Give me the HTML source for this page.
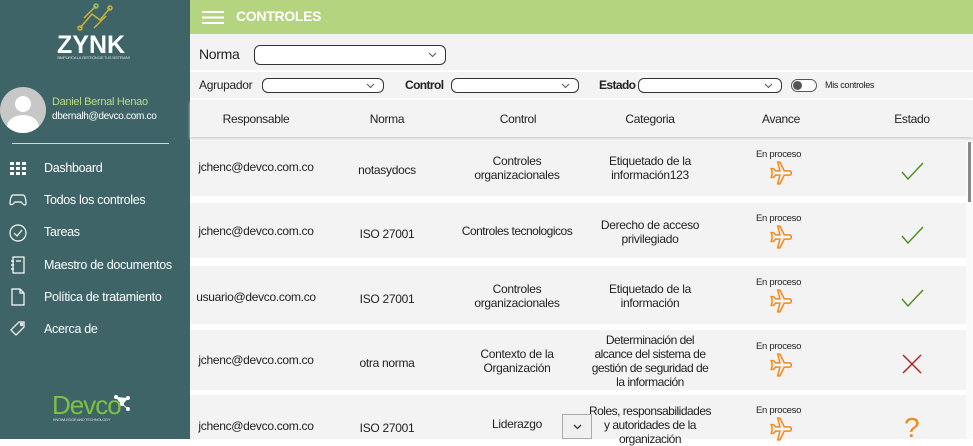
<!DOCTYPE html>
<html><head><meta charset="utf-8"><style>
*{margin:0;padding:0;box-sizing:border-box}
body{width:973px;height:439px;overflow:hidden;font-family:"Liberation Sans",sans-serif;background:#fff;position:relative;color:#222;letter-spacing:-0.3px}
.sb{position:absolute;left:0;top:0;width:190px;height:439px;background:#3e6468;color:#fff}
.abs{position:absolute}
.top{position:absolute;left:190px;top:0;width:783px;height:34px;background:#b4d47f}
.f{position:absolute;left:190px;width:783px;background:#f3f3f3}
.sel{position:absolute;border:1px solid #333;border-radius:6px;height:15px;background:#fff}
.sel svg{position:absolute;right:8px;top:4px}
.row{position:absolute;left:190px;width:776px;background:#f3f3f3}
.c{position:absolute;text-align:center;font-size:12px;line-height:14px;transform:translateX(-50%);white-space:nowrap}
.nav{position:absolute;left:44px;font-size:12.5px}
</style></head><body>
<div class="sb">
  <svg class="abs" style="left:70px;top:0" width="50" height="32" viewBox="0 0 50 32" fill="none" stroke="#c9b13a" stroke-width="1.5"><path d="M10 28 L22 14 L30 20 L40 8 M14 18 L26 6 M24 28 L36 16"/><circle cx="10" cy="28" r="2"/><circle cx="40" cy="8" r="2"/><circle cx="26" cy="6" r="2" stroke="#9bc25a"/></svg>
  <div class="abs" style="left:57px;top:31px;font:bold 25px 'Liberation Sans',sans-serif;letter-spacing:0">ZYNK</div>
  <div class="abs" style="left:57px;top:55px;font-size:4px;color:#ddd">SIMPLIFICA LA GESTIÓN DE TUS SISTEMAS</div>
  <div class="abs" style="left:0;top:87px;width:46px;height:46px;border-radius:50%;background:#c7c7c7;overflow:hidden">
    <div class="abs" style="left:15px;top:9px;width:16px;height:16px;border-radius:50%;background:#fff"></div>
    <div class="abs" style="left:7px;top:28px;width:32px;height:24px;border-radius:50%;background:#fff"></div>
  </div>
  <div class="abs" style="left:52px;top:96px;font-size:11px;color:#b9dc7e">Daniel Bernal Henao</div>
  <div class="abs" style="left:52px;top:111px;font-size:10px">dbernalh@devco.com.co</div>
  <div class="abs" style="left:12px;top:143px;width:157px;height:1px;background:#cfd9da"></div>
  <svg class="abs" style="left:10px;top:162px" width="16" height="14"><g fill="#fff"><rect x="0" y="0" width="4" height="3"/><rect x="6" y="0" width="4" height="3"/><rect x="12" y="0" width="4" height="3"/><rect x="0" y="5" width="4" height="3"/><rect x="6" y="5" width="4" height="3"/><rect x="12" y="5" width="4" height="3"/><rect x="0" y="10" width="4" height="3"/><rect x="6" y="10" width="4" height="3"/><rect x="12" y="10" width="4" height="3"/></g></svg>
  <div class="nav" style="top:161px">Dashboard</div>
  <svg class="abs" style="left:9px;top:194px" width="18" height="12" fill="none" stroke="#fff" stroke-width="1.2"><path d="M4 1h10c2 0 3 5 3 8s-2 2-3 1l-2-2H6l-2 2c-1 1-3 1-3-1s1-8 3-8z"/></svg>
  <div class="nav" style="top:193px">Todos los controles</div>
  <svg class="abs" style="left:9px;top:224px" width="18" height="18" fill="none" stroke="#fff" stroke-width="1.2"><circle cx="9" cy="9" r="8"/><path d="M5 9l3 3 5-6"/></svg>
  <div class="nav" style="top:225px">Tareas</div>
  <svg class="abs" style="left:11px;top:256px" width="14" height="18" fill="none" stroke="#fff" stroke-width="1.2"><rect x="2" y="1" width="11" height="16"/><path d="M5 5h5M0 5h3M0 9h3M0 13h3"/></svg>
  <div class="nav" style="top:258px">Maestro de documentos</div>
  <svg class="abs" style="left:11px;top:288px" width="14" height="18" fill="none" stroke="#fff" stroke-width="1.2"><path d="M1 1h8l4 4v12H1z M9 1v4h4"/></svg>
  <div class="nav" style="top:290px">Política de tratamiento</div>
  <svg class="abs" style="left:9px;top:320px" width="18" height="18" fill="none" stroke="#fff" stroke-width="1.2"><path d="M10 2h5v5l-8 8-5-5z"/><circle cx="12.5" cy="4.5" r="1"/></svg>
  <div class="nav" style="top:322px">Acerca de</div>
  <div class="abs" style="left:52px;top:390px;font:26px 'Liberation Sans',sans-serif;color:#7cc242;letter-spacing:-1px">Devco</div>
  <svg class="abs" style="left:112px;top:394px" width="20" height="20" fill="#fff" stroke="#fff" stroke-width="1"><circle cx="4" cy="3" r="1.5"/><circle cx="16" cy="4" r="1.5"/><circle cx="10" cy="10" r="1.5"/><circle cx="16" cy="15" r="1.5"/><path d="M4 3L10 10L16 4M10 10L16 15"/></svg>
  <div class="abs" style="left:53px;top:417px;font-size:4px;color:#ddd">KNOWLEDGE AND TECHNOLOGY</div>
</div>
<div class="top">
  <svg class="abs" style="left:12px;top:10px" width="22" height="15" stroke="#fff" stroke-width="2"><path d="M0 2h22M0 7.5h22M0 13h22"/></svg>
  <div class="abs" style="left:46px;top:8px;font:bold 14px 'Liberation Sans',sans-serif;color:#fff">CONTROLES</div>
</div>
<div class="f" style="top:34px;height:36px">
  <div class="abs" style="left:9px;top:12px;font-size:14px">Norma</div>
  <div class="sel" style="left:64px;top:11px;width:192px;height:20px"><svg width="9" height="6" style="top:6px"><path d="M1 1l3.5 3.5L8 1" fill="none" stroke="#555"/></svg></div>
</div>
<div class="f" style="top:72px;height:26px">
  <div class="abs" style="left:9px;top:6px;font-size:12px">Agrupador</div>
  <div class="sel" style="left:72px;top:6px;width:122px"><svg width="9" height="6"><path d="M1 1l3.5 3.5L8 1" fill="none" stroke="#555"/></svg></div>
  <div class="abs" style="left:215px;top:6px;font-size:12px;font-weight:bold;letter-spacing:-0.6px">Control</div>
  <div class="sel" style="left:261px;top:6px;width:128px"><svg width="9" height="6"><path d="M1 1l3.5 3.5L8 1" fill="none" stroke="#555"/></svg></div>
  <div class="abs" style="left:409px;top:6px;font-size:12px;font-weight:bold;letter-spacing:-0.6px">Estado</div>
  <div class="sel" style="left:448px;top:6px;width:144px"><svg width="9" height="6"><path d="M1 1l3.5 3.5L8 1" fill="none" stroke="#555"/></svg></div>
  <div class="abs" style="left:601px;top:7px;width:26px;height:13px;border:1px solid #555;border-radius:7px;background:#fff"><div class="abs" style="left:1px;top:1px;width:9px;height:9px;border-radius:50%;background:#555"></div></div>
  <div class="abs" style="left:635px;top:8px;font-size:9px">Mis controles</div>
</div>
<div class="f" style="top:100px;height:37px;box-shadow:0 2px 3px #ccc;z-index:2">
  <div class="c" style="left:66px;top:12px">Responsable</div>
  <div class="c" style="left:197px;top:12px">Norma</div>
  <div class="c" style="left:328px;top:12px">Control</div>
  <div class="c" style="left:460px;top:12px">Categoria</div>
  <div class="c" style="left:591px;top:12px">Avance</div>
  <div class="c" style="left:722px;top:12px">Estado</div>
</div>
<div class="abs" style="left:966px;top:137px;width:7px;height:302px;background:#fafafa"><div class="abs" style="left:2px;top:5px;width:3px;height:60px;background:#888"></div></div>

<div class="row" style="top:141px;height:55px">
 <div class="c" style="left:66px;top:19px">jchenc@devco.com.co</div>
 <div class="c" style="left:197px;top:22px">notasydocs</div>
 <div class="c" style="left:327px;top:13px">Controles<br>organizacionales</div>
 <div class="c" style="left:460px;top:13px">Etiquetado de la<br>información123</div>
</div>
<div class="row" style="top:203px;height:55px">
 <div class="c" style="left:66px;top:21px">jchenc@devco.com.co</div>
 <div class="c" style="left:197px;top:24px">ISO 27001</div>
 <div class="c" style="left:327px;top:21px;letter-spacing:-0.5px">Controles tecnologicos</div>
 <div class="c" style="left:460px;top:15px">Derecho de acceso<br>privilegiado</div>
</div>
<div class="row" style="top:266px;height:58px">
 <div class="c" style="left:66px;top:24px">usuario@devco.com.co</div>
 <div class="c" style="left:197px;top:26px">ISO 27001</div>
 <div class="c" style="left:327px;top:16px">Controles<br>organizacionales</div>
 <div class="c" style="left:460px;top:16px">Etiquetado de la<br>información</div>
</div>
<div class="row" style="top:330px;height:60px">
 <div class="c" style="left:66px;top:23px">jchenc@devco.com.co</div>
 <div class="c" style="left:197px;top:26px">otra norma</div>
 <div class="c" style="left:327px;top:17px">Contexto de la<br>Organización</div>
 <div class="c" style="left:460px;top:3px;letter-spacing:-0.5px">Determinación del<br>alcance del sistema de<br>gestión de seguridad de<br>la información</div>
</div>
<div class="row" style="top:395px;height:44px">
 <div class="c" style="left:66px;top:24px">jchenc@devco.com.co</div>
 <div class="c" style="left:197px;top:26px">ISO 27001</div>
 <div class="c" style="left:327px;top:22px">Liderazgo</div>
 <div class="c" style="left:460px;top:9px;letter-spacing:-0.5px">Roles, responsabilidades<br>y autoridades de la<br>organización</div>
</div>
<div class="abs" style="left:562px;top:414px;width:30px;height:25px;background:#f0f0f0;border:1px solid #aaa"><svg class="abs" style="left:10px;top:9px" width="9" height="6"><path d="M1 1l3.5 3.5L8 1" fill="none" stroke="#333" stroke-width="1.3"/></svg></div>

<div class="abs" style="left:756px;top:149px;font-size:9.5px">En proceso</div>
<div class="abs" style="left:756px;top:213px;font-size:9.5px">En proceso</div>
<div class="abs" style="left:756px;top:277px;font-size:9.5px">En proceso</div>
<div class="abs" style="left:756px;top:341px;font-size:9.5px">En proceso</div>
<div class="abs" style="left:756px;top:405px;font-size:9.5px">En proceso</div>
<svg width="0" height="0" style="position:absolute"><defs><symbol id="pl" viewBox="0 0 24 24"><path fill="none" stroke="#f08a1c" stroke-width="1.4" d="M9 2h2l4 8h5c2 0 2 4 0 4h-5l-4 8H9l2-8H7l-2 2H3l1-4-1-4h2l2 2h4z"/></symbol></defs></svg>
<svg class="abs" style="left:768px;top:160px" width="26" height="26"><use href="#pl"/></svg>
<svg class="abs" style="left:768px;top:224px" width="26" height="26"><use href="#pl"/></svg>
<svg class="abs" style="left:768px;top:288px" width="26" height="26"><use href="#pl"/></svg>
<svg class="abs" style="left:768px;top:352px" width="26" height="26"><use href="#pl"/></svg>
<svg class="abs" style="left:768px;top:416px" width="26" height="26"><use href="#pl"/></svg>
<svg class="abs" style="left:900px;top:162px" width="24" height="20" fill="none" stroke="#4f8a1e" stroke-width="1.4"><path d="M2 10l6 7L23 1"/></svg>
<svg class="abs" style="left:900px;top:226px" width="24" height="20" fill="none" stroke="#4f8a1e" stroke-width="1.4"><path d="M2 10l6 7L23 1"/></svg>
<svg class="abs" style="left:900px;top:289px" width="24" height="20" fill="none" stroke="#4f8a1e" stroke-width="1.4"><path d="M2 10l6 7L23 1"/></svg>
<svg class="abs" style="left:902px;top:354px" width="20" height="20" fill="none" stroke="#b01c1c" stroke-width="1.4"><path d="M1 1l18 18M19 1L1 19"/></svg>
<div class="abs" style="left:904px;top:412px;font-size:28px;color:#f08a1c;font-family:'Liberation Sans',sans-serif;font-weight:300">?</div>
</body></html>
